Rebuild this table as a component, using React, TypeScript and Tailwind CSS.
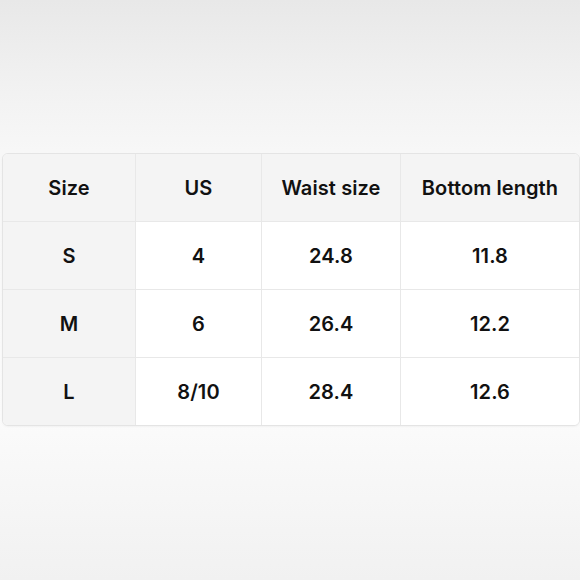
import React from 'react';

const rows = [
  ['S', '4', '24.8', '11.8'],
  ['M', '6', '26.4', '12.2'],
  ['L', '8/10', '28.4', '12.6'],
];

const headers = ['Size', 'US', 'Waist size', 'Bottom length'];

export default function App() {
  return (
    <div
      className="h-[580px] w-[580px] overflow-hidden pt-[153px] pl-[2px] bg-[linear-gradient(180deg,#e8e8e8_0%,#f2f2f2_16%,#f7f7f7_26%,#fbfbfb_72%,#f1f1f1_100%)]"
      style={{ fontFamily: 'Inter, "Noto Sans", sans-serif' }}
    >
      <div className="w-[578px] overflow-hidden rounded-[6px] border border-[#e4e4e4] bg-white shadow-[0_1px_2px_rgba(0,0,0,0.04)]">
        <div className="grid grid-cols-[132px_126px_139px_1fr] text-[20px] font-semibold tracking-[0.1px] text-[#111]">
          {headers.map((h, i) => (
            <div
              key={h}
              className={`flex h-[67px] items-center justify-center bg-[#f4f4f4] ${i > 0 ? 'border-l border-[#e8e8e8]' : ''}`}
            >
              {h}
            </div>
          ))}
          {rows.map((r) =>
            r.map((c, i) => (
              <div
                key={r[0] + i}
                className={`flex h-[68px] items-center justify-center border-t border-[#e8e8e8] ${
                  i === 0 ? 'bg-[#f4f4f4]' : 'border-l bg-white'
                }`}
              >
                {c}
              </div>
            ))
          )}
        </div>
      </div>
    </div>
  );
}
